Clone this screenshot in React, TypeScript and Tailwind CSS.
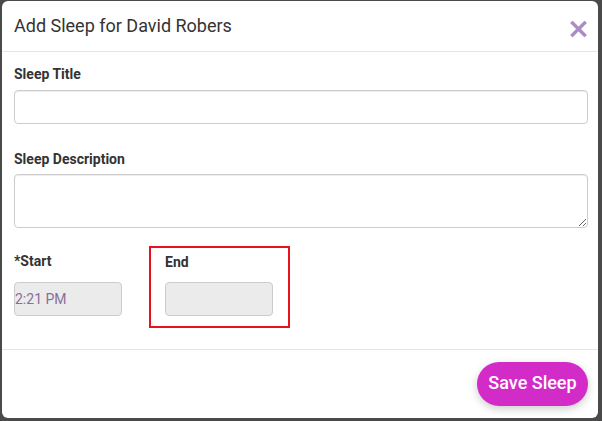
import React from 'react';

// Close glyph used in the modal header
const CloseIcon = () => (
  <svg width="17" height="16" viewBox="0 0 17 16" fill="none">
    <path d="M2.5 2L14.5 14M14.5 2L2.5 14" stroke="#ab8cc4" strokeWidth="3.4" strokeLinecap="square" />
  </svg>
);

export default function App() {
  return (
    <div className="w-[602px] h-[421px] bg-[#4a4a4a] pt-px pl-[2px] overflow-hidden" style={{ fontFamily: 'Roboto, "Liberation Sans", sans-serif' }}>
      <div className="w-[596px] h-[417px] bg-white rounded-[6px] flex flex-col overflow-hidden">
        {/* Header */}
        <div className="h-[51px] shrink-0 border-b border-[#e5e5e5] flex items-center justify-between pl-[12px] pr-[11px]">
          <h4 className="text-[18px] leading-[20px] text-[#333] mt-[-1px]">Add Sleep for David Robers</h4>
          <button className="mt-[5px]">
            <CloseIcon />
          </button>
        </div>

        {/* Body */}
        <div className="px-[12px] pt-[12px] flex-1 border-b border-[#e5e5e5]">
          <label className="block text-[14px] leading-[20px] font-bold text-[#333] mb-[6px]">Sleep Title</label>
          <input className="block w-[574px] h-[34px] border border-[#ccc] rounded-[4px] shadow-[inset_0_1px_1px_rgba(0,0,0,0.075)] outline-none" />

          <label className="block text-[14px] leading-[20px] font-bold text-[#333] mt-[25px] mb-[5px]">Sleep Description</label>
          <textarea className="block w-[574px] h-[54px] border border-[#ccc] rounded-[4px] shadow-[inset_0_1px_1px_rgba(0,0,0,0.075)] outline-none" />

          <div className="flex mt-[18px] gap-[27px]">
            <div className="pt-[5px]">
              <label className="block text-[14px] leading-[20px] font-bold text-[#333] mb-[11px]">*Start</label>
              <div className="w-[108px] h-[34px] border border-[#ccc] rounded-[4px] bg-[#ebebeb] flex items-center text-[14px] text-[#86709a]">
                2:21 PM
              </div>
            </div>
            <div className="border-2 border-[#e8121f] w-[141px] h-[82px] pl-[14px] pt-[4px]">
              <label className="block text-[14px] leading-[20px] font-bold text-[#333] mb-[10px]">End</label>
              <div className="w-[108px] h-[34px] border border-[#ccc] rounded-[4px] bg-[#ebebeb]" />
            </div>
          </div>
        </div>

        {/* Footer */}
        <div className="h-[68px] shrink-0 flex items-center justify-end pr-[10px]">
          <button className="h-[44px] w-[111px] pb-[3px] rounded-full bg-[#d22bc7] text-white text-[18px] font-medium shadow-[0_3px_8px_rgba(0,0,0,0.2)]">
            Save Sleep
          </button>
        </div>
      </div>
    </div>
  );
}
